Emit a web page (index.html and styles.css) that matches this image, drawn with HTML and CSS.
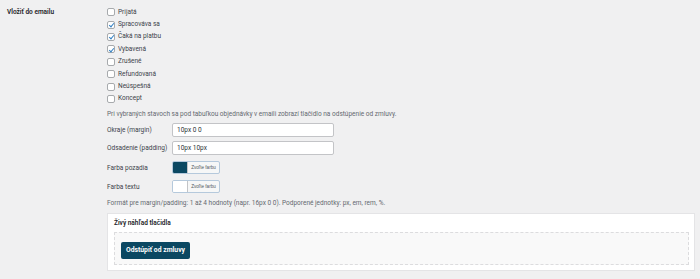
FILE: index.html
```html
<!DOCTYPE html>
<html lang="sk">
<head>
    <meta charset="UTF-8">
    <meta name="viewport" content="width=device-width, initial-scale=1.0">
    <title>Nastavenia - Odstúpenie od zmluvy</title>
    <link rel="stylesheet" href="styles.css">
</head>
<body>
    <div class="form-row">
        <div class="row-label">Vložiť do emailu</div>

        <div class="row-field">
            <!-- Order statuses -->
            <ul class="statuses">
                <li><label><input type="checkbox"> Prijatá</label></li>
                <li><label><input type="checkbox" checked> Spracováva sa</label></li>
                <li><label><input type="checkbox" checked> Čaká na platbu</label></li>
                <li><label><input type="checkbox" checked> Vybavená</label></li>
                <li><label><input type="checkbox"> Zrušené</label></li>
                <li><label><input type="checkbox"> Refundovaná</label></li>
                <li><label><input type="checkbox"> Neúspešná</label></li>
                <li><label><input type="checkbox"> Koncept</label></li>
            </ul>
            <p class="description">Pri vybraných stavoch sa pod tabuľkou objednávky v emaili zobrazí tlačidlo na odstúpenie od zmluvy.</p>

            <!-- Button style -->
            <div class="style-grid">
                <label for="btn-margin">Okraje (margin)</label>
                <input type="text" id="btn-margin" class="text-input" value="10px 0 0">

                <label for="btn-padding">Odsadenie (padding)</label>
                <input type="text" id="btn-padding" class="text-input" value="10px 10px">

                <span class="style-label">Farba pozadia</span>
                <button type="button" class="color-result">
                    <span class="swatch swatch-dark"></span>
                    <span class="color-text">Zvoľte farbu</span>
                </button>

                <span class="style-label">Farba textu</span>
                <button type="button" class="color-result">
                    <span class="swatch"></span>
                    <span class="color-text">Zvoľte farbu</span>
                </button>
            </div>
            <p class="description format-note">Formát pre margin/padding: 1 až 4 hodnoty (napr. 16px 0 0). Podporené jednotky: px, em, rem, %.</p>

            <!-- Live preview -->
            <div class="preview">
                <h4>Živý náhľad tlačidla</h4>
                <div class="preview-area">
                    <a href="#" class="preview-btn">Odstúpiť od zmluvy</a>
                </div>
            </div>
        </div>
    </div>
</body>
</html>
```

FILE: styles.css
```css
body {
    margin: 0;
    background: #f0f0f1;
    color: #3c434a;
    font-family: "Segoe UI", Roboto, "Noto Sans", sans-serif;
    font-size: 6.5px;
    line-height: 1.4;
}

.form-row {
    display: grid;
    grid-template-columns: 100px 1fr;
    padding: 6px 5px 0 7px;
}

.row-label {
    color: #1d2327;
    font-weight: 600;
    line-height: 12.4px;
}

.statuses {
    list-style: none;
    margin: 0;
    padding: 0;
}

.statuses li {
    height: 12.4px;
    display: flex;
    align-items: center;
}

.statuses label {
    display: flex;
    align-items: center;
    gap: 3px;
}

.statuses input {
    appearance: none;
    width: 8px;
    height: 8px;
    margin: 0;
    border: 1px solid #a7aaad;
    border-radius: 2px;
    background: #fff;
    position: relative;
    box-sizing: border-box;
}

.statuses input:checked::before {
    content: "";
    position: absolute;
    left: 2px;
    top: 0.5px;
    width: 2px;
    height: 4px;
    border: solid #3582c4;
    border-width: 0 1.2px 1.2px 0;
    transform: rotate(40deg);
}

.description {
    margin: 5px 0 0;
    color: #646970;
}

.style-grid {
    display: grid;
    grid-template-columns: 65px auto;
    justify-content: start;
    align-items: center;
    row-gap: 4px;
    margin-top: 4px;
}

.style-grid label,
.style-label {
    color: #3c434a;
}

.style-label {
    padding-top: 3px;
}

.text-input {
    width: 162px;
    height: 14px;
    box-sizing: border-box;
    margin: 0;
    padding: 0 4px;
    border: 1px solid #c3c4c7;
    border-radius: 2px;
    background: #fff;
    color: #2c3338;
    font: inherit;
}

.color-result {
    display: flex;
    align-items: stretch;
    width: 48px;
    height: 13px;
    margin-top: 2px;
    padding: 0;
    border: 1px solid #b5c9dc;
    border-radius: 2px;
    background: #f6f7f7;
    overflow: hidden;
    box-sizing: border-box;
    cursor: pointer;
}

.swatch {
    width: 14px;
    background: #fff;
    border-right: 1px solid #c3c4c7;
}

.swatch-dark {
    background: #0b4862;
}

.color-text {
    flex: 1;
    font-family: inherit;
    font-size: 4.6px;
    line-height: 11px;
    color: #50575e;
    text-align: center;
}

.format-note {
    margin-top: 6px;
}

.preview {
    margin-top: 5px;
    padding: 4px 5px 5px 6px;
    background: #fff;
    border: 1px solid #e4e4e6;
}

.preview h4 {
    margin: 0 0 3px;
    color: #1d2327;
    font-size: 6.5px;
    font-weight: 600;
    line-height: 11px;
}

.preview-area {
    padding: 5px 6px 5px;
    background: #f9f9f9;
    border: 1px dashed #dcdcde;
}

.preview-btn {
    display: inline-block;
    margin-top: 4px;
    padding: 5px 5px;
    background: #0b4862;
    color: #fff;
    border-radius: 2px;
    font-size: 6.8px;
    font-weight: 700;
    line-height: 7px;
    text-decoration: none;
}
```
